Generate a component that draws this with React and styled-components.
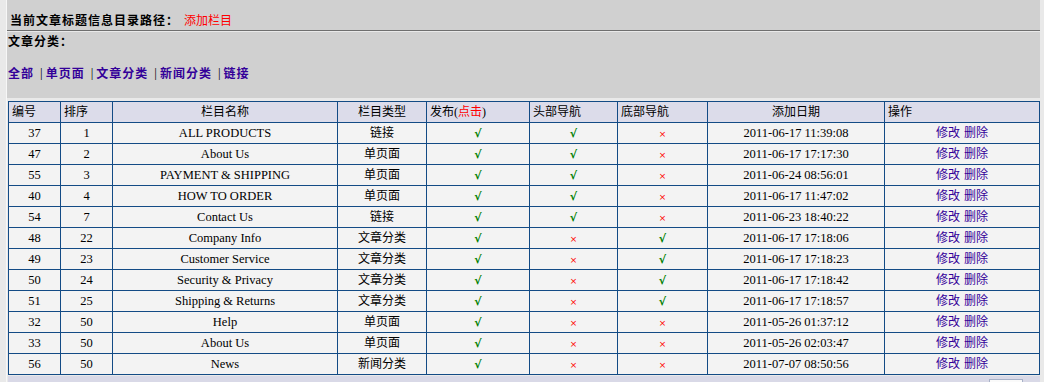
import React from "react";
import styled, { createGlobalStyle } from "styled-components";

const GlobalStyle = createGlobalStyle`
  html, body { margin: 0; padding: 0; }
  body {
    background: #e9e9e9;
    font-family: "Liberation Serif", "Noto Sans CJK SC", serif;
    font-size: 12px;
    color: #000;
  }
`;

const Page = styled.div`
  width: 1044px;
  height: 382px;
  overflow: hidden;
  box-sizing: border-box;
  padding: 0 4px 0 6px;
`;

const Frame = styled.div`
  border-left: 1px solid #f7f7f7;
  height: 100%;
`;

const TitleBar = styled.div`
  height: 31px;
  box-sizing: border-box;
  padding: 12px 0 0 3px;
  line-height: 16px;
  background: #d0d0d0;
  border-bottom: 1px solid #6f6f6f;
  font-family: "Noto Sans CJK SC", sans-serif;
`;

const Strong = styled.span`
  font-weight: 700;
  font-size: 12px;
  letter-spacing: 1px;
`;

const RedText = styled.span`
  color: #ff0000;
  font-size: 12px;
  margin-left: 5px;
`;

const CategoryPanel = styled.div`
  margin-top: 1px;
  height: 66px;
  background: #d0d0d0;
  padding-left: 1px;
  font-family: "Noto Sans CJK SC", sans-serif;
`;

const PanelLine = styled.div`
  line-height: 18px;
  height: 18px;
  display: flex;
  align-items: center;
  margin-top: ${(p) => p.$gap || 0}px;
`;

const CatLink = styled.a`
  color: #330099;
  font-weight: 700;
  letter-spacing: 1px;
  text-decoration: none;
  font-size: 12px;
`;

const Sep = styled.span`
  font-family: "Liberation Serif", serif;
  font-size: 13px;
  margin: 0 3px 0 6px;
  color: #000;
`;

const TableWrap = styled.div`
  padding: 3px 2px 0 1px;
`;

const Grid = styled.table`
  width: 1031px;
  border-collapse: collapse;
  table-layout: fixed;
  border: 1px solid #134b85;
`;

const HeadCell = styled.th`
  background: #dcdcea;
  border: 1px solid #134b85;
  height: 20px;
  padding: 0 0 0 ${(p) => (p.$align === "left" ? 3 : 0)}px;
  text-align: ${(p) => p.$align || "center"};
  vertical-align: middle;
  font-weight: 400;
  font-size: 12px;
  line-height: 16px;
  white-space: nowrap;
  overflow: hidden;
`;

const Cell = styled.td`
  background: #f3f3f3;
  border: 1px solid #134b85;
  height: 20px;
  padding: 0;
  text-align: center;
  vertical-align: middle;
  font-size: 12.5px;
  line-height: 16px;
  white-space: nowrap;
  overflow: hidden;
`;

const Check = styled.span`
  color: #008000;
  font-family: "DejaVu Sans", sans-serif;
  font-weight: 700;
  font-size: 11px;
`;

const Cross = styled.span`
  color: #ff0000;
  font-family: "DejaVu Sans", sans-serif;
  font-size: 9px;
`;

const OpLink = styled.a`
  color: #330099;
  text-decoration: none;
  font-size: 12px;
  margin: 0 2px;
`;

const CjkText = styled.span`
  font-size: 12px;
`;

const Red = styled.span`
  color: #ff0000;
`;

const Footer = styled.div`
  margin: 1px 0 0 1px;
  height: 20px;
  background: #d9d9e7;
  display: flex;
  justify-content: flex-end;
  padding: 3px 17px 0 0;
  box-sizing: border-box;
`;

const PageInput = styled.div`
  width: 32px;
  height: 16px;
  background: #fafafa;
  border: 1px solid #a8b2c8;
`;

const columns = [
  { label: "编号", width: 52, align: "left" },
  { label: "排序", width: 52, align: "left" },
  { label: "栏目名称", width: 225 },
  { label: "栏目类型", width: 89 },
  { label: "发布", width: 103, align: "left", extra: true },
  { label: "头部导航", width: 88, align: "left" },
  { label: "底部导航", width: 90, align: "left" },
  { label: "添加日期", width: 177 },
  { label: "操作", width: 155, align: "left" },
];

const rows = [
  [37, 1, "ALL PRODUCTS", "链接", 1, 1, 0, "2011-06-17 11:39:08"],
  [47, 2, "About Us", "单页面", 1, 1, 0, "2011-06-17 17:17:30"],
  [55, 3, "PAYMENT & SHIPPING", "单页面", 1, 1, 0, "2011-06-24 08:56:01"],
  [40, 4, "HOW TO ORDER", "单页面", 1, 1, 0, "2011-06-17 11:47:02"],
  [54, 7, "Contact Us", "链接", 1, 1, 0, "2011-06-23 18:40:22"],
  [48, 22, "Company Info", "文章分类", 1, 0, 1, "2011-06-17 17:18:06"],
  [49, 23, "Customer Service", "文章分类", 1, 0, 1, "2011-06-17 17:18:23"],
  [50, 24, "Security & Privacy", "文章分类", 1, 0, 1, "2011-06-17 17:18:42"],
  [51, 25, "Shipping & Returns", "文章分类", 1, 0, 1, "2011-06-17 17:18:57"],
  [32, 50, "Help", "单页面", 1, 0, 0, "2011-05-26 01:37:12"],
  [33, 50, "About Us", "单页面", 1, 0, 0, "2011-05-26 02:03:47"],
  [56, 50, "News", "新闻分类", 1, 0, 0, "2011-07-07 08:50:56"],
];

const Mark = ({ on }) => (on ? <Check>√</Check> : <Cross>×</Cross>);

const categories = ["全部", "单页面", "文章分类", "新闻分类", "链接"];

export default function App() {
  return (
    <>
      <GlobalStyle />
      <Page>
        <Frame>
          <TitleBar>
            <Strong>当前文章标题信息目录路径：</Strong>
            <RedText>添加栏目</RedText>
          </TitleBar>
          <CategoryPanel>
            <PanelLine>
              <Strong>文章分类：</Strong>
            </PanelLine>
            <PanelLine $gap={14}>
              {categories.map((c, i) => (
                <React.Fragment key={c}>
                  {i > 0 && <Sep>|</Sep>}
                  <CatLink href="#">{c}</CatLink>
                </React.Fragment>
              ))}
            </PanelLine>
          </CategoryPanel>
          <TableWrap>
            <Grid>
              <colgroup>
                {columns.map((c) => (
                  <col key={c.label} style={{ width: c.width }} />
                ))}
              </colgroup>
              <thead>
                <tr>
                  {columns.map((c) => (
                    <HeadCell key={c.label} $align={c.align}>
                      {c.label}
                      {c.extra && (
                        <>
                          (<Red>点击</Red>)
                        </>
                      )}
                    </HeadCell>
                  ))}
                </tr>
              </thead>
              <tbody>
                {rows.map((r) => (
                  <tr key={r[0]}>
                    <Cell>{r[0]}</Cell>
                    <Cell>{r[1]}</Cell>
                    <Cell>{r[2]}</Cell>
                    <Cell>
                      <CjkText>{r[3]}</CjkText>
                    </Cell>
                    <Cell>
                      <Mark on={r[4]} />
                    </Cell>
                    <Cell>
                      <Mark on={r[5]} />
                    </Cell>
                    <Cell>
                      <Mark on={r[6]} />
                    </Cell>
                    <Cell>{r[7]}</Cell>
                    <Cell>
                      <OpLink href="#">修改</OpLink>
                      <OpLink href="#">删除</OpLink>
                    </Cell>
                  </tr>
                ))}
              </tbody>
            </Grid>
          </TableWrap>
          <Footer>
            <PageInput />
          </Footer>
        </Frame>
      </Page>
    </>
  );
}
